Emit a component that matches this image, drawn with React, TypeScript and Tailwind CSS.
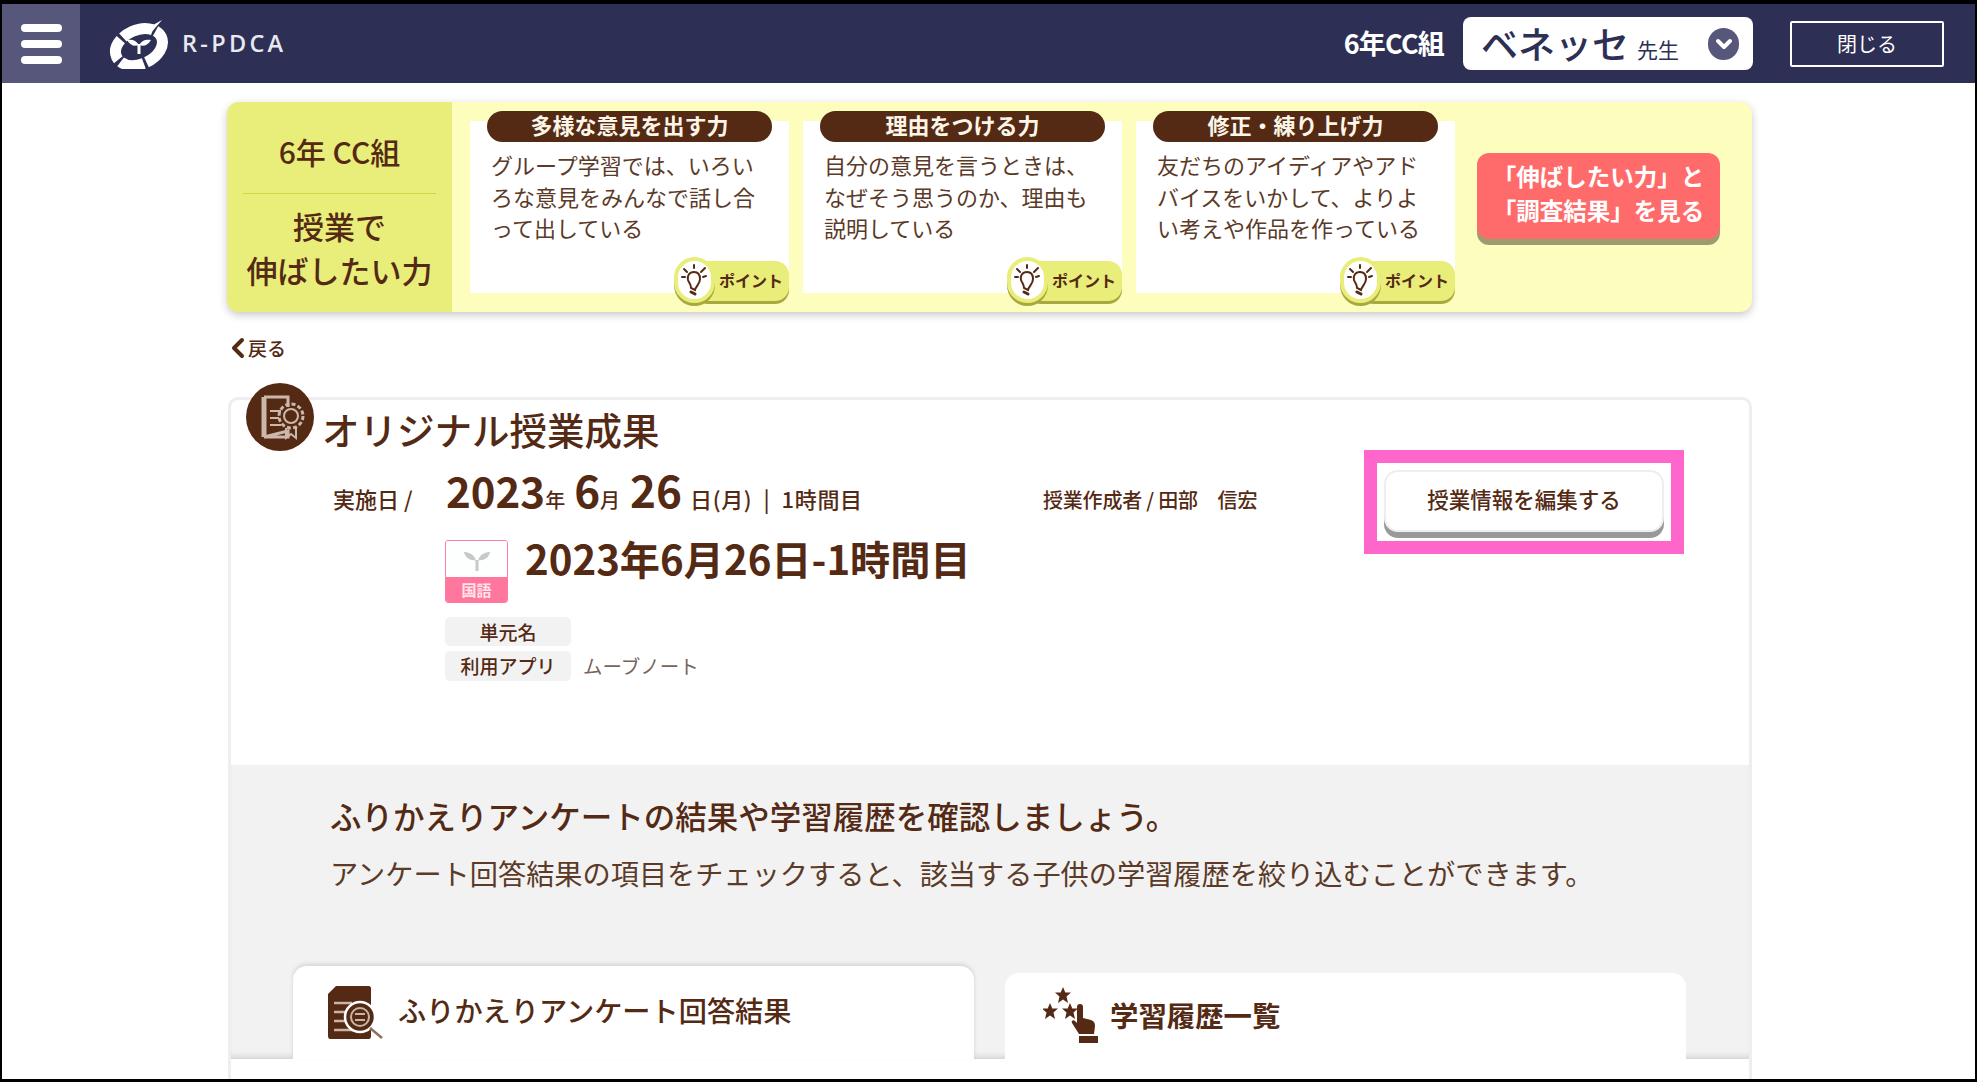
const cards = [
  { title: '多様な意見を出す力', lines: ['グループ学習では、いろい', 'ろな意見をみんなで話し合', 'って出している'] },
  { title: '理由をつける力', lines: ['自分の意見を言うときは、', 'なぜそう思うのか、理由も', '説明している'] },
  { title: '修正・練り上げ力', lines: ['友だちのアイディアやアド', 'バイスをいかして、よりよ', 'い考えや作品を作っている'] },
];

function Logo() {
  return (
    <svg width="60" height="50" viewBox="0 0 60 50" fill="none">
      <g transform="rotate(-24 30 28)">
        <ellipse cx="30" cy="28" rx="24.500" ry="17" stroke="#fff" strokeWidth="11" strokeDasharray="32 3 24 3 22 3 32 3" />
      </g>
      <path d="M30 35V25" stroke="#fff" strokeWidth="3" />
      <path d="M30 26C27 21 23 20 18 21C21 26 25 28 30 26ZM30 26C33 21 37 20 42 21C39 26 35 28 30 26Z" fill="#fff" />
      <path d="M28 15L53 1L41 15Z" fill="#fff" />
    </svg>
  );
}

function Bulb() {
  return (
    <svg width="30" height="34" viewBox="0 0 30 34" fill="none" stroke="#542a14" strokeWidth="2" strokeLinecap="round">
      <path d="M14 9C9 9 7 13 8 17C9 20 11 21 11 25L15 27C16 23 20 21 20 16C20 12 18 9 14 9Z" />
      <path d="M11 29L15 31" strokeWidth="3" />
      <path d="M14 2V5M4 6L7 9M25 5L21 9M2 14L5 14M26 13L23 14" />
    </svg>
  );
}

function PointBadge() {
  return (
    <div className="absolute right-0 bottom-[-11px] flex h-[49px] w-[115px] items-center">
      <div className="absolute left-[20px] right-0 top-[6px] h-[40px] rounded-[14px] bg-[#e9ed7a] shadow-[0_3px_0_#a9a83f]" />
      <div className="relative flex h-[46px] w-[41px] shrink-0 items-center justify-center rounded-full bg-white border-[4px] border-[#e9ed7a] shadow-[0_3px_0_#a9a83f]">
        <Bulb />
      </div>
      <span className="relative ml-[4px] text-[16px] leading-none font-bold text-[#542a14] whitespace-nowrap">ポイント</span>
    </div>
  );
}

function DocGearIcon() {
  return (
    <svg width="68" height="68" viewBox="0 0 68 68" fill="none">
      <ellipse cx="34" cy="34" rx="34" ry="34" fill="#542a14" />
      <path d="M18 14H42V24M42 48V54H18Z" stroke="#cbb8ab" strokeWidth="3" fill="none" />
      <path d="M18 14V54" stroke="#cbb8ab" strokeWidth="5" />
      <path d="M24 28H35M24 35H33M24 42H35" stroke="#cbb8ab" strokeWidth="2" />
      <circle cx="45" cy="33" r="7" stroke="#cbb8ab" strokeWidth="2" />
      <circle cx="45" cy="33" r="12" stroke="#cbb8ab" strokeWidth="3" strokeDasharray="4 2.3" />
      <path d="M40 45V55L45 51L50 55V45" stroke="#cbb8ab" strokeWidth="2" />
    </svg>
  );
}

function SubjectIcon() {
  return (
    <div className="flex h-[63px] w-[63px] shrink-0 flex-col overflow-hidden rounded-[3px] border border-[#ff7aa2]">
      <div className="flex h-[36px] items-center justify-center bg-[#fdfefe]">
        <svg width="26" height="26" viewBox="0 0 26 26" fill="#c8c8c8">
          <path d="M11.5 13V25H14.5V13C17 8 21 6 26 6C25 12 19 15 14.500 14H11.500C7 15 1 12 0 6C5 6 9 8 11.500 13Z" />
        </svg>
      </div>
      <div className="flex flex-1 items-center justify-center bg-[#ff779c] text-[15px] leading-none font-bold text-white/80">国語</div>
    </div>
  );
}

function SurveyIcon() {
  return (
    <svg width="56" height="55" viewBox="0 0 56 55" fill="none" className="shrink-0">
      <path d="M8 0H41C42 0 43 1 43 2V50C43 52 42 53 41 53H2C1 53 0 52 0 50V8Z" fill="#542a14" />
      <path d="M6 17H24M6 26H20M6 35H20M6 44H28" stroke="#c9b5a8" strokeWidth="2.500" />
      <circle cx="32" cy="31" r="15" fill="#542a14" stroke="#fff" strokeWidth="2.500" />
      <circle cx="32" cy="31" r="9" fill="#542a14" stroke="#c9b5a8" strokeWidth="2" />
      <path d="M27 28H37M27 34H37" stroke="#c9b5a8" strokeWidth="2" />
      <path d="M42 42L54 52" stroke="#8f6f5f" strokeWidth="2.500" />
    </svg>
  );
}

function HistoryIcon() {
  const star = 'M0 -8L2.300 -2.500L8 -2.500L3.500 1.500L5 8L0 4.500L-5 8L-3.500 1.500L-8 -2.500L-2.300 -2.500Z';
  return (
    <svg width="58" height="56" viewBox="0 0 58 56" fill="#542a14" className="shrink-0">
      <path d={star} transform="translate(20 8)" />
      <path d={star} transform="translate(7 24)" />
      <path d={star} transform="translate(27 24)" />
      <path d="M37 17C39 17 40 18 40 20V31L48 33C51 34 52 36 52 39L51 47H36L29 36C28 34 30 32 32 34L34 36V20C34 18 35 17 37 17Z" />
      <rect x="36" y="49" width="19" height="7" />
    </svg>
  );
}

export default function App() {
  return (
    <div className="flex h-screen w-full flex-col overflow-hidden border-x-2 border-t-4 border-b-[3px] border-black bg-white font-['Noto_Sans_CJK_JP','Noto_Sans',sans-serif] text-[#542a14]">
      {/* Header */}
      <header className="flex h-[79px] shrink-0 items-center bg-[#2d2f55]">
        <button className="flex h-full w-[78px] flex-col items-center justify-center gap-[8px] bg-[#56577a]">
          <span className="h-[8px] w-[41px] rounded-full bg-white" />
          <span className="h-[8px] w-[41px] rounded-full bg-white" />
          <span className="h-[8px] w-[41px] rounded-full bg-white" />
        </button>
        <div className="ml-[29px] flex items-center">
          <Logo />
          <span className="ml-[13px] font-['Open_Sans',sans-serif] text-[23.500px] font-semibold tracking-[0.14em] text-[#e8e8ee]">R-PDCA</span>
        </div>
        <span className="ml-auto text-[27px] font-bold tracking-[-0.03em] text-white">6年CC組</span>
        <div className="ml-[19px] flex h-[53px] w-[290px] items-center rounded-[8px] bg-white pl-[18px]">
          <span className="text-[37px] leading-none font-medium text-[#2d2f55]">ベネッセ</span>
          <span className="mt-[12px] ml-[8px] text-[21px] leading-none text-[#2d2f55]">先生</span>
          <span className="ml-[29px] flex h-[32px] w-[31px] items-center justify-center rounded-full bg-[#56577a]">
            <svg width="18" height="12" viewBox="0 0 18 12" fill="none" stroke="#fff" strokeWidth="4" strokeLinecap="round" strokeLinejoin="round">
              <path d="M3 3L9 9L15 3" />
            </svg>
          </span>
        </div>
        <button className="mr-[31px] ml-[37px] h-[46px] w-[154px] rounded-[2px] border-2 border-white text-[20px] text-white">閉じる</button>
      </header>

      <main className="ml-[225px] w-[1525px] pt-[19px]">
        {/* Banner */}
        <section className="flex h-[210px] rounded-[12px] bg-[#fdfdbd] shadow-[0_3px_8px_rgba(0,0,0,0.22)]">
          <div className="flex w-[225px] shrink-0 flex-col items-center rounded-l-[12px] bg-[#e9ed7a] pt-[29px]">
            <div className="text-[30px] leading-[40px] font-medium">6年 CC組</div>
            <div className="mt-[22px] h-[1px] w-[193px] bg-[#cdd83c]" />
            <div className="mt-[10px] text-center text-[31px] leading-[44px] font-medium">
              授業で<br />伸ばしたい力
            </div>
          </div>
          <div className="flex gap-[14px] pt-[19px] pl-[18px]">
            {cards.map((card) => (
              <div key={card.title} className="relative h-[172px] w-[319px] bg-white">
                <div className="mx-[17px] -mt-[10px] h-[31px] rounded-full bg-[#542a14] pb-[2px] text-center text-[22px] leading-[27px] font-bold text-[#fdf6e8]">
                  {card.title}
                </div>
                <div className="mt-[7px] pl-[21px] text-[22px] leading-[31.5px] text-[#5b3a28]">
                  {card.lines.map((line) => (
                    <div key={line} className="whitespace-nowrap">{line}</div>
                  ))}
                </div>
                <PointBadge />
              </div>
            ))}
          </div>
          <button className="mt-[51px] ml-[22px] h-[86px] w-[243px] rounded-[12px] bg-[#ff6b6b] pb-[6px] text-center text-[23.500px] leading-[34px] font-bold whitespace-nowrap text-white shadow-[0_6px_0_#9c9c70]">
            「伸ばしたい力」と<br />「調査結果」を見る
          </button>
        </section>

        {/* Back */}
        <div className="mt-[25px] ml-[3px] flex h-[22px] items-center gap-[3px] text-[19px] font-medium">
          <svg width="15" height="22" viewBox="0 0 15 22" fill="none" stroke="#542a14" strokeWidth="4" strokeLinecap="round" strokeLinejoin="round">
            <path d="M12 3L4 11L12 19" />
          </svg>
          <span>戻る</span>
        </div>

        {/* Result card */}
        <section className="relative mt-[38px] ml-[1px] h-[700px] rounded-t-[10px] border-[3px] border-[#eeeeee]">
          <div className="absolute -top-[17px] left-[15px]">
            <DocGearIcon />
          </div>
          <div className="h-[365px]">
            <h1 className="h-[50px] pt-[6px] pl-[91px] text-[37.500px] leading-[46px] font-medium whitespace-nowrap">オリジナル授業成果</h1>
            <div className="flex">
              <div className="w-[1133px] pl-[102px]">
                <div className="flex h-[90px] items-baseline pt-[6px] font-medium whitespace-nowrap">
                  <span className="w-[113px] text-[22px]">実施日 /</span>
                  <div className="flex w-[597px] items-baseline text-[20px]">
                    <span className="text-[42px] leading-[50px] font-bold">2023</span>
                    <span>年</span>
                    <span className="ml-[9px] text-[44px] font-bold">6</span>
                    <span>月</span>
                    <span className="ml-[10px] text-[44px] font-bold">26</span>
                    <span className="ml-[8px] text-[22px] tracking-[0.03em]">日(月)&nbsp;&nbsp;|&nbsp;&nbsp;1時間目</span>
                  </div>
                  <span className="text-[20px] tracking-[-0.01em]">授業作成者 / 田部　信宏</span>
                </div>
                <div className="flex items-start pl-[112px]">
                  <SubjectIcon />
                  <span className="-mt-[4px] ml-[17px] text-[40.200px] leading-[44px] font-bold whitespace-nowrap">2023年6月26日-1時間目</span>
                </div>
                <div className="mt-[14px] flex flex-col gap-[5px] pl-[112px]">
                  <div className="flex items-center">
                    <span className="h-[29px] w-[126px] rounded-[5px] bg-[#f2f2f2] text-center text-[19px] leading-[29px] font-medium">単元名</span>
                  </div>
                  <div className="flex items-center">
                    <span className="h-[30px] w-[126px] rounded-[5px] bg-[#f2f2f2] text-center text-[19px] leading-[30px] font-medium">利用アプリ</span>
                    <span className="ml-[12px] text-[19.500px] leading-none text-[#7a6458]">ムーブノート</span>
                  </div>
                </div>
              </div>
              <div className="h-[104px] w-[320px] border-[13px] border-[#ff66cc] p-[7px] pb-0">
                <button className="h-[62px] w-[280px] rounded-[14px] border-2 border-[#eeeeee] bg-white pb-[4px] text-[21.500px] font-medium shadow-[0_6px_0_#999999]">
                  授業情報を編集する
                </button>
              </div>
            </div>
          </div>

          {/* Survey section */}
          <div className="h-[294px] bg-[#f2f2f2] shadow-[inset_0_-6px_6px_-4px_rgba(0,0,0,0.15)]">
            <div className="pt-[30px] pl-[99px]">
              <h2 className="text-[31.500px] leading-[40px] font-medium whitespace-nowrap">ふりかえりアンケートの結果や学習履歴を確認しましょう。</h2>
              <p className="mt-[18px] text-[28.200px] leading-[40px] text-[#5b3a28] whitespace-nowrap">アンケート回答結果の項目をチェックすると、該当する子供の学習履歴を絞り込むことができます。</p>
            </div>
            <div className="mt-[73px] flex items-end gap-[31px] pl-[62px]">
              <div className="flex h-[93px] w-[681px] items-start gap-[14px] rounded-t-[14px] bg-white pt-[20px] pl-[35px] shadow-[0_-2px_4px_rgba(0,0,0,0.12)]">
                <SurveyIcon />
                <span className="text-[28.200px] leading-[48px] font-medium whitespace-nowrap">ふりかえりアンケート回答結果</span>
              </div>
              <div className="flex h-[86px] w-[681px] items-start gap-[9px] rounded-t-[14px] bg-white pt-[14px] pl-[38px]">
                <HistoryIcon />
                <span className="pt-[3px] text-[28.400px] leading-[50px] font-bold whitespace-nowrap">学習履歴一覧</span>
              </div>
            </div>
          </div>
        </section>
      </main>
    </div>
  );
}
